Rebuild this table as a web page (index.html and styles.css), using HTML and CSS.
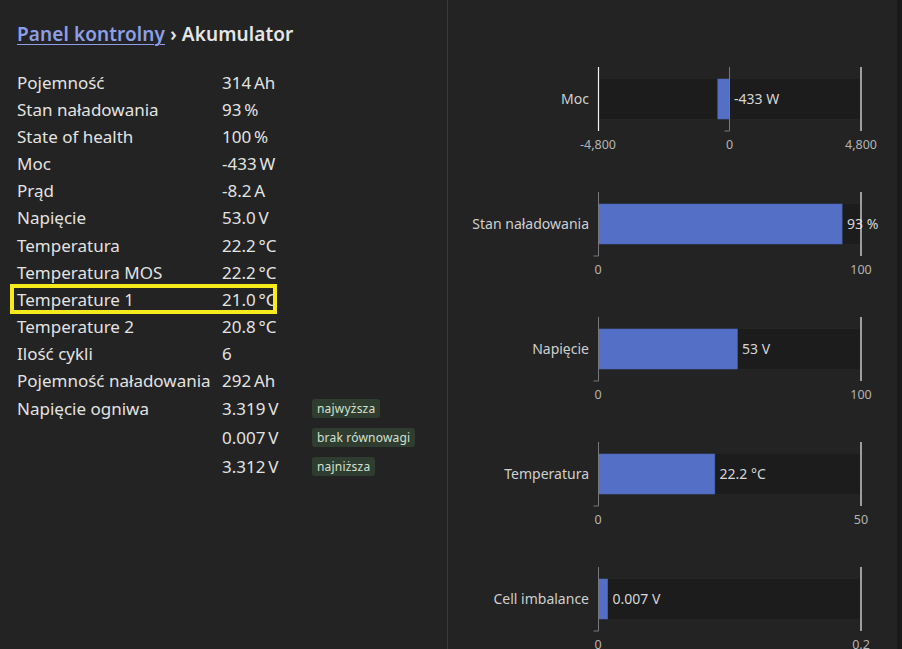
FILE: index.html
```html
<!DOCTYPE html>
<html lang="pl">
<head>
<meta charset="utf-8">
<title>Akumulator</title>
<link rel="stylesheet" href="styles.css">
</head>
<body>
<div class="app">
  <section class="info">
    <h1 class="crumbs"><a class="crumb-link" href="#">Panel kontrolny</a> <span class="sep">›</span> Akumulator</h1>
    <div class="table">
      <div class="row"><span class="k">Pojemność</span><span class="v">314&thinsp;Ah</span></div>
      <div class="row"><span class="k">Stan naładowania</span><span class="v">93&thinsp;%</span></div>
      <div class="row"><span class="k">State of health</span><span class="v">100&thinsp;%</span></div>
      <div class="row"><span class="k">Moc</span><span class="v">-433&thinsp;W</span></div>
      <div class="row"><span class="k">Prąd</span><span class="v">-8.2&thinsp;A</span></div>
      <div class="row"><span class="k">Napięcie</span><span class="v">53.0&thinsp;V</span></div>
      <div class="row"><span class="k">Temperatura</span><span class="v">22.2&thinsp;°C</span></div>
      <div class="row"><span class="k">Temperatura MOS</span><span class="v">22.2&thinsp;°C</span></div>
      <div class="row hl"><span class="k">Temperature 1</span><span class="v">21.0&thinsp;°C</span></div>
      <div class="row"><span class="k">Temperature 2</span><span class="v">20.8&thinsp;°C</span></div>
      <div class="row"><span class="k">Ilość cykli</span><span class="v">6</span></div>
      <div class="row"><span class="k">Pojemność naładowania</span><span class="v">292&thinsp;Ah</span></div>
      <div class="row tall"><span class="k">Napięcie ogniwa</span><span class="v">3.319&thinsp;V</span><span class="badge">najwyższa</span></div>
      <div class="row tall"><span class="k"></span><span class="v">0.007&thinsp;V</span><span class="badge">brak równowagi</span></div>
      <div class="row tall"><span class="k"></span><span class="v">3.312&thinsp;V</span><span class="badge">najniższa</span></div>
    </div>
  </section>

  <section class="charts">
    <svg class="chart" width="449" height="125" viewBox="0 0 449 125">
      <rect class="track" x="150.5" y="42" width="262.5" height="40"/>
      <rect class="bar" x="269.8" y="42" width="11.8" height="40"/>
      <line class="grid" x1="150.5" y1="30" x2="150.5" y2="94"/>
      <line class="grid" x1="413" y1="30" x2="413" y2="94"/>
      <polyline class="axis" points="276.5,94 281.5,94 281.5,30"/>
      <text class="name" x="141" y="61.5">Moc</text>
      <text class="val" x="286" y="61.5">-433 W</text>
      <text class="tick" x="150" y="107">-4,800</text>
      <text class="tick" x="281.5" y="107">0</text>
      <text class="tick" x="413" y="107">4,800</text>
    </svg>

    <svg class="chart" width="449" height="125" viewBox="0 0 449 125">
      <rect class="track" x="150.5" y="42" width="262.5" height="40"/>
      <rect class="bar" x="150.5" y="42" width="243.6" height="40"/>
      <polyline class="axis" points="145.5,94 150.5,94 150.5,30"/>
      <text class="name" x="141" y="61.5">Stan naładowania</text>
      <text class="val" x="399" y="61.5">93 %</text>
      <line class="grid" x1="413" y1="30" x2="413" y2="94"/>
      <text class="tick" x="150" y="107">0</text>
      <text class="tick" x="413" y="107">100</text>
    </svg>

    <svg class="chart" width="449" height="125" viewBox="0 0 449 125">
      <rect class="track" x="150.5" y="42" width="262.5" height="40"/>
      <rect class="bar" x="150.5" y="42" width="138.9" height="40"/>
      <polyline class="axis" points="145.5,94 150.5,94 150.5,30"/>
      <line class="grid" x1="413" y1="30" x2="413" y2="94"/>
      <text class="name" x="141" y="61.5">Napięcie</text>
      <text class="val" x="294" y="61.5">53 V</text>
      <text class="tick" x="150" y="107">0</text>
      <text class="tick" x="413" y="107">100</text>
    </svg>

    <svg class="chart" width="449" height="125" viewBox="0 0 449 125">
      <rect class="track" x="150.5" y="42" width="262.5" height="40"/>
      <rect class="bar" x="150.5" y="42" width="116.3" height="40"/>
      <polyline class="axis" points="145.5,94 150.5,94 150.5,30"/>
      <line class="grid" x1="413" y1="30" x2="413" y2="94"/>
      <text class="name" x="141" y="61.5">Temperatura</text>
      <text class="val" x="271.5" y="61.5">22.2 °C</text>
      <text class="tick" x="150" y="107">0</text>
      <text class="tick" x="413" y="107">50</text>
    </svg>

    <svg class="chart" width="449" height="125" viewBox="0 0 449 125">
      <rect class="track" x="150.5" y="42" width="262.5" height="40"/>
      <rect class="bar" x="150.5" y="42" width="9.2" height="40"/>
      <polyline class="axis" points="145.5,94 150.5,94 150.5,30"/>
      <line class="grid" x1="413" y1="30" x2="413" y2="94"/>
      <text class="name" x="141" y="61.5">Cell imbalance</text>
      <text class="val" x="164.5" y="61.5">0.007 V</text>
      <text class="tick" x="150" y="107">0</text>
      <text class="tick" x="413" y="107">0.2</text>
    </svg>
  </section>
</div>
</body>
</html>
```

FILE: styles.css
```css
html, body {
  margin: 0;
  padding: 0;
  height: 649px;
  overflow: hidden;
  background: #191919;
}

body {
  font-family: "Noto Sans", "Open Sans", sans-serif;
  color: #e2e2e2;
}

.app {
  display: flex;
  width: 897px;
  height: 649px;
  background: #232323;
}

.info {
  width: 430px;
  flex: none;
  padding: 0 0 0 17px;
  border-right: 1px solid #3a3a3a;
}

.crumbs {
  margin: 20px 0 21px;
  font-size: 19px;
  line-height: 28px;
  font-weight: 600;
  letter-spacing: 0.1px;
  color: #e6e6e6;
}

.crumb-link {
  color: #8d9fe8;
  text-decoration: underline;
  text-decoration-thickness: 1px;
  text-underline-offset: 3px;
}

.sep {
  color: #e6e6e6;
}

.table {
  display: flex;
  flex-direction: column;
}

.row {
  display: flex;
  align-items: center;
  padding: 3px 0;
  font-size: 17px;
  line-height: 21.1px;
}

.k {
  width: 205px;
  flex: none;
  white-space: nowrap;
}

.v {
  width: 90px;
  flex: none;
  white-space: nowrap;
}

.badge {
  display: inline-block;
  margin: 2px 0;
  padding: 0 5px;
  font-size: 12px;
  line-height: 19px;
  border-radius: 3px;
  background: #2f3d31;
  color: #d2e0d2;
  letter-spacing: 0.2px;
}

.row.hl {
  position: relative;
}

.row.hl::after {
  content: "";
  position: absolute;
  left: -7px;
  top: -1.5px;
  width: 267px;
  height: 29.5px;
  box-sizing: border-box;
  border: 4px solid #f6e91c;
  pointer-events: none;
}

.charts {
  flex: 1;
  padding-top: 37px;
  overflow: hidden;
}

.chart {
  display: block;
  font-family: "Noto Sans", "Open Sans", sans-serif;
}

.track {
  fill: #1c1c1c;
}

.bar {
  fill: #5470c6;
  stroke: #4a63b3;
  stroke-width: 0.6;
}

.grid {
  stroke: #f0f0f0;
  stroke-width: 1.2;
}

.axis {
  fill: none;
  stroke: #77787e;
  stroke-width: 1;
}

.name {
  font-size: 14px;
  fill: #cfcfcf;
  text-anchor: end;
  dominant-baseline: central;
}

.val {
  font-size: 14px;
  fill: #d6d6d6;
  dominant-baseline: central;
}

.tick {
  font-size: 12.5px;
  fill: #b3b3b3;
  text-anchor: middle;
  dominant-baseline: central;
}
```
